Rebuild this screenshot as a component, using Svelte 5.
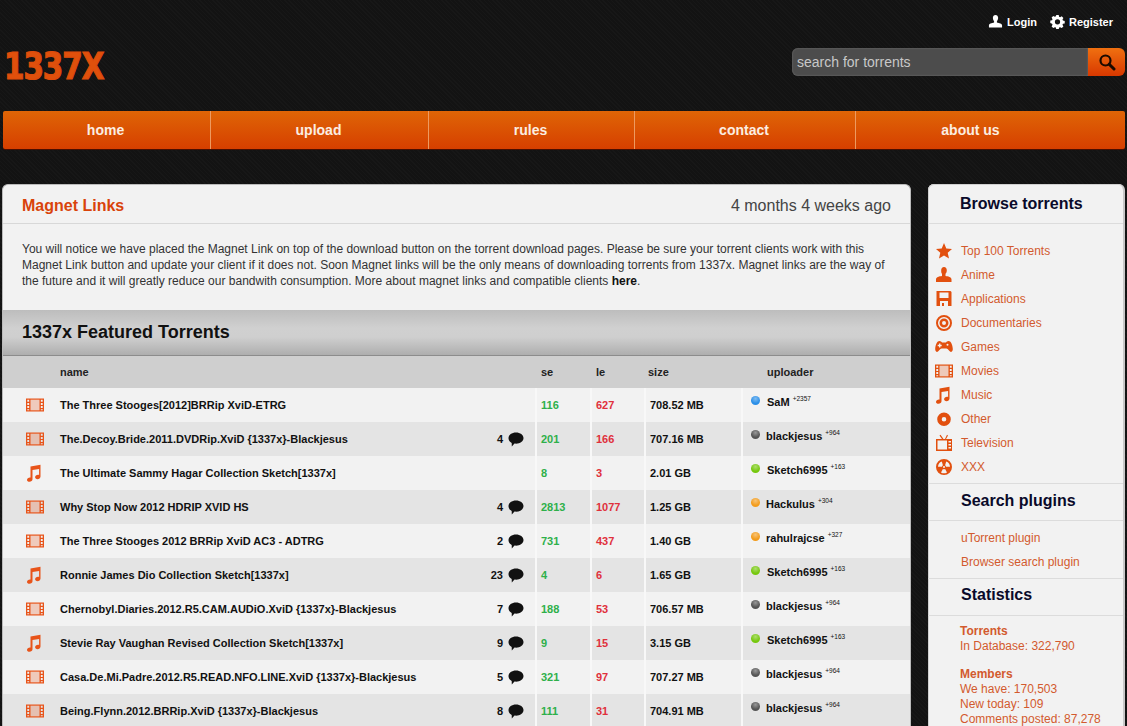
<script>
  const cats = ['Top 100 Torrents','Anime','Applications','Documentaries','Games','Movies','Music','Other','Television','XXX'];
  const catIcons = ['star','user','disk','doc','game','film','music','other','tv','xxx'];
  const nav = [['home',208,2],['upload',218,2],['rules',206,2],['contact',221,2],['about us',270,40]];
  const rows = [
    ['film','The Three Stooges[2012]BRRip XviD-ETRG','', '116','627','708.52 MB','#2b8fe8','SaM','+2357',7],
    ['film','The.Decoy.Bride.2011.DVDRip.XviD {1337x}-Blackjesus','4','201','166','707.16 MB','#555','blackjesus','+964',6],
    ['music','The Ultimate Sammy Hagar Collection Sketch[1337x]','','8','3','2.01 GB','#76c80e','Sketch6995','+163',7],
    ['film','Why Stop Now 2012 HDRIP XVID HS','4','2813','1077','1.25 GB','#f39c1c','Hackulus','+304',6],
    ['film','The Three Stooges 2012 BRRip XviD AC3 - ADTRG','2','731','437','1.40 GB','#f39c1c','rahulrajcse','+327',6],
    ['music','Ronnie James Dio Collection Sketch[1337x]','23','4','6','1.65 GB','#76c80e','Sketch6995','+163',7],
    ['film','Chernobyl.Diaries.2012.R5.CAM.AUDiO.XviD {1337x}-Blackjesus','7','188','53','706.57 MB','#555','blackjesus','+964',6],
    ['music','Stevie Ray Vaughan Revised Collection Sketch[1337x]','9','9','15','3.15 GB','#76c80e','Sketch6995','+163',7],
    ['film','Casa.De.Mi.Padre.2012.R5.READ.NFO.LINE.XviD {1337x}-Blackjesus','5','321','97','707.27 MB','#555','blackjesus','+964',6],
    ['film','Being.Flynn.2012.BRRip.XviD {1337x}-Blackjesus','8','111','31','704.91 MB','#555','blackjesus','+964',6]
  ];
</script>

{#snippet icon(name)}
  <svg class="ic" viewBox="0 0 18 18" fill="currentColor" aria-hidden="true">
    {#if name === 'star'}
      <path d="M9 1l2.300 5.400 5.700.5-4.300 3.800 1.300 5.800L9 13.400l-5 3.100 1.300-5.800L1 6.900l5.700-.5z"/>
    {:else if name === 'user'}
      <path d="M9 1c1.800 0 2.800 1.500 2.800 3.200 0 1.600-.6 2.900-1.300 3.600v2.200c2.500.3 6 .9 6 3.500v2.500H1V13.500c0-2.600 3.500-3.200 6-3.500V7.800C6.300 7.100 6.200 5.800 6.200 4.200 6.200 2.500 7.200 1 9 1z"/>
    {:else if name === 'disk'}
      <path fill-rule="evenodd" d="M1.500 1h14l1 1v14h-15zM4.500 2.500v5.500h9V2.500zM5 11v5h2v-3h2v3h4v-5z"/>
    {:else if name === 'doc'}
      <path fill-rule="evenodd" d="M9 1a8 8 0 1 1 0 16A8 8 0 0 1 9 1zm0 2a6 6 0 1 0 0 12A6 6 0 0 0 9 3zm0 1.500a4.500 4.500 0 1 1 0 9 4.500 4.500 0 0 1 0-9zm0 2.500a2 2 0 1 0 0 4 2 2 0 0 0 0-4z"/>
    {:else if name === 'game'}
      <path fill-rule="evenodd" d="M4.500 3c1.200 0 2 .8 2.600 1.500h3.800C11.500 3.800 12.300 3 13.500 3c2.300 0 4 3.500 4.300 8 .1 2-1.300 3.300-2.400 2.800-1.300-.6-2.300-3.300-3.900-3.300H6.500c-1.600 0-2.600 2.700-3.900 3.300C1.500 14.300.1 13 .2 11 .5 6.500 2.200 3 4.500 3zM4 5.500v1.300H2.700v1.400H4v1.300h1.400V8.200h1.300V6.800H5.400V5.500zM12.500 5.800a1 1 0 1 0 0 2 1 1 0 0 0 0-2z"/>
    {:else if name === 'film'}
      <path d="M3.500 4h11v10h-11z" opacity=".25"/>
      <path fill-rule="evenodd" d="M0 2.500h18v13H0zM1.300 3.800v1.900h1.900V3.800zm3.200 0v10.400h9V3.800zm10.300 0v1.900h1.900V3.800zM1.300 7v1.900h1.900V7zm13.500 0v1.900h1.900V7zM1.300 10.100V12h1.900v-1.900zm13.500 0V12h1.900v-1.900zM1.300 13.200v1h1.900v-1zm13.500 0v1h1.900v-1z"/>
    {:else if name === 'music'}
      <path d="M4.500 2.500 14.500.8v11.700c0 1.600-1.400 2.700-3 2.700-1.400 0-2.400-.8-2.400-1.900 0-1.400 1.400-2.500 3-2.500.4 0 .8.100 1 .2V5L6.500 6.100v9.200c0 1.500-1.400 2.500-3 2.500C2.100 17.800 1 17 1 15.900c0-1.400 1.400-2.500 3-2.500.2 0 .4 0 .5.100z"/>
    {:else if name === 'other'}
      <path fill-rule="evenodd" d="M9 2.500a6.800 6.800 0 1 1 0 13.600A6.800 6.800 0 0 1 9 2.500zm0 4.500a2.300 2.300 0 1 0 0 4.600A2.300 2.300 0 0 0 9 7z"/>
    {:else if name === 'tv'}
      <path fill-rule="evenodd" d="M1 5h6L4.500 1.500l1-.7L8.500 5h1.500L12 .8l1 .7L11 5h6v12H1zM2.500 6.500v9h9.500v-9zM13.500 7v1.500H16V7zm0 3v1.500H16V10zm0 3v1.500H16V13z"/>
    {:else}
      <path fill-rule="evenodd" d="M9 1a8 8 0 1 1 0 16A8 8 0 0 1 9 1zM6.800 3.500A6 6 0 0 0 3 8.800h4a2 2 0 0 1 .9-1.600zm4.400 0L10.100 7.200a2 2 0 0 1 .9 1.600h4a6 6 0 0 0-3.800-5.300zM9 8a1 1 0 1 0 0 2 1 1 0 0 0 0-2zm-1.100 3L6 14.400a6 6 0 0 0 6 0L10.100 11a2 2 0 0 1-2.200 0z"/>
    {/if}
  </svg>
{/snippet}

<div class="page">
  <header class="top">
    <div class="userlinks">
      <span class="ul">
        <svg viewBox="0 0 16 16" width="15" height="15" fill="#fff"><path d="M8 1c1.700 0 2.800 1.300 2.800 3.100 0 1.500-.6 2.800-1.300 3.500v1.500c2.500.5 5.500 1.200 5.500 3.200v2.200H1v-2.200c0-2 3-2.700 5.500-3.200V7.600C5.800 6.900 5.200 5.600 5.200 4.100 5.200 2.300 6.300 1 8 1z"/></svg>
        Login
      </span>
      <span class="ul">
        <svg viewBox="0 0 16 16" width="15" height="15" fill="#fff"><path fill-rule="evenodd" d="M6.700 1h2.600l.4 1.900 1.100.5 1.700-1 1.800 1.800-1 1.700.5 1.100 1.900.4v2.600l-1.900.4-.5 1.100 1 1.700-1.800 1.800-1.700-1-1.100.5-.4 1.900H6.700l-.4-1.900-1.100-.5-1.700 1-1.800-1.800 1-1.700-.5-1.100L.3 9.600V7l1.900-.4.5-1.100-1-1.700 1.800-1.800 1.700 1 1.100-.5zM8 5.500a2.800 2.800 0 1 0 0 5.600 2.800 2.800 0 0 0 0-5.600z"/></svg>
        Register
      </span>
    </div>
    <div class="brand">
      <div class="logo">1337X</div>
      <div class="search">
        <div class="field">search for torrents</div>
        <div class="go">
          <svg viewBox="0 0 18 18" width="18" height="18" fill="none" stroke="#1a0a00" stroke-width="2.200"><circle cx="7.500" cy="7.500" r="5"/><path d="M11.200 11.200 16 16" stroke-width="3" stroke-linecap="round"/></svg>
        </div>
      </div>
    </div>
    <nav class="nav">
      {#each nav as [label, w, pr]}
        <div class="navitem" style="width:{w}px;padding-right:{pr}px">{label}</div>
      {/each}
    </nav>
  </header>

  <div class="cols">
    <main class="panel">
      <div class="phead">
        <h2>Magnet Links</h2>
        <span class="when">4 months 4 weeks ago</span>
      </div>
      <p class="notice">You will notice we have placed the Magnet Link on top of the download button on the torrent download pages. Please be sure your torrent clients work with this Magnet Link button and update your client if it does not. Soon Magnet links will be the only means of downloading torrents from 1337x. Magnet links are the way of the future and it will greatly reduce our bandwith consumption. More about magnet links and compatible clients <b>here</b>.</p>
      <h3 class="featured">1337x Featured Torrents</h3>
      <table>
        <colgroup>
          <col style="width:533px"/><col style="width:55px"/><col style="width:54px"/><col style="width:97px"/><col/>
        </colgroup>
        <thead>
          <tr><th class="nm">name</th><th>se</th><th>le</th><th class="szh">size</th><th class="up">uploader</th></tr>
        </thead>
        <tbody>
          {#each rows as r}
            <tr>
              <td class="nm">
                <div class="namecell">
                  <span class="ricon">{@render icon(r[0])}</span>
                  <span class="title">{r[1]}</span>
                  {#if r[2]}
                    <span class="cmt">{r[2]}
                      <svg viewBox="0 0 16 15" width="16" height="15" fill="#111"><path d="M8 .5c4.200 0 7.500 2.400 7.500 5.600S12.200 11.700 8 11.700c-.5 0-1 0-1.500-.1L3.800 14.500l-.1-3.600C1.700 10 .5 8.300.5 6.100.5 2.900 3.800.5 8 .5z"/></svg>
                    </span>
                  {/if}
                </div>
              </td>
              <td class="se">{r[3]}</td>
              <td class="le">{r[4]}</td>
              <td class="sz">{r[5]}</td>
              <td class="ucell">
                <span class="dot" style="--c:{r[6]}"></span><span class="uname" style="margin-left:{r[9]}px">{r[7]}</span><sup>{r[8]}</sup>
              </td>
            </tr>
          {/each}
        </tbody>
      </table>
    </main>

    <aside class="side">
      <h4 class="browse">Browse torrents</h4>
      <ul class="catlist">
        {#each cats as c, i}
          <li><span class="cicon">{@render icon(catIcons[i])}</span>{c}</li>
        {/each}
      </ul>
      <h4 class="sh">Search plugins</h4>
      <ul class="plugins"><li>uTorrent plugin</li><li>Browser search plugin</li></ul>
      <h4 class="sh st">Statistics</h4>
      <div class="stats">
        <div class="grp"><b>Torrents</b><br/>In Database: 322,790</div>
        <div class="grp"><b>Members</b><br/>We have: 170,503<br/>New today: 109<br/>Comments posted: 87,278</div>
      </div>
    </aside>
  </div>
</div>

<style>
  :global(html), :global(body) { margin: 0; height: 726px; overflow: hidden; background: #151515; }
  .page {
    height: 726px; overflow: hidden; box-sizing: border-box;
    font-family: "Liberation Sans", Arial, sans-serif; color: #111;
    background: #141414 repeating-linear-gradient(45deg, #171717 0 1px, #131313 1px 3px);
  }
  .top { padding: 0 2px 0 3px; height: 184px; box-sizing: border-box; }
  .userlinks {
    display: flex; justify-content: flex-end; gap: 13px; height: 46px; padding: 14px 12px 0 0; box-sizing: border-box;
    color: #fff; font-size: 11px; font-weight: bold;
  }
  .ul { display: flex; align-items: center; gap: 4px; height: 15px; }
  .brand { display: flex; justify-content: space-between; height: 65px; align-items: flex-start; }
  .logo {
    font-family: "DejaVu Sans Condensed", "DejaVu Sans", sans-serif; font-weight: bold; font-size: 38px; line-height: 38px; letter-spacing: -1.200px;
    margin: 1px 0 0 1px; transform: scaleX(.86); transform-origin: left top;
    color: #e0500c; -webkit-text-stroke: 1.200px #de4c0b;
  }
  .search { display: flex; width: 333px; height: 28px; margin-top: 2px; }
  .field {
    flex: 1; background: #4c4c4c; border-radius: 6px 0 0 6px; color: #c8c8c8; font-size: 14px; line-height: 28px; padding-left: 5px;
    box-shadow: inset 0 0 2px #777;
  }
  .go {
    width: 37px; background: linear-gradient(#f07010, #d83800); border-radius: 0 6px 6px 0;
    display: flex; align-items: center; justify-content: center;
  }
  .nav { display: flex; height: 38px; background: linear-gradient(#df6506, #d63f00); border-radius: 2px; box-shadow: 0 1px 0 #4a0e00; }
  .navitem {
    box-sizing: border-box; border-right: 1px solid #ed9a60; color: #fbeee2; font-weight: bold; font-size: 14px; line-height: 38px; text-align: center;
  }
  .navitem:last-child { border-right: none; flex: 1; }
  .cols { display: flex; padding-left: 2px; }
  .panel {
    width: 909px; background: #f2f2f2; border-radius: 6px 6px 0 0; border: 1px solid #bbb; border-bottom: none; box-sizing: border-box; height: 542px; overflow: hidden;
  }
  .phead {
    display: flex; justify-content: space-between; align-items: center; height: 39px; padding: 3px 19px 0; box-sizing: border-box; border-bottom: 1px solid #d8d8d8;
  }
  h2 { margin: 0; font-size: 16px; color: #d9430a; }
  .when { font-size: 16px; color: #444; }
  .notice { margin: 0; padding: 17px 19px 20px; font-size: 12px; line-height: 16px; color: #333; height: 49px; box-sizing: content-box; }
  .notice b { color: #111; }
  .featured {
    margin: 0; height: 45px; line-height: 45px; padding-left: 19px; font-size: 18px; color: #111;
    background: linear-gradient(#bdbdbd, #d0d0d0 40%, #cfcfcf 60%, #aeaeae);
    border-bottom: 1px solid #8c8c8c;
  }
  table { width: 100%; border-collapse: collapse; table-layout: fixed; font-size: 11px; }
  th {
    height: 32px; background: #cfcfcf; text-align: left; padding: 0 0 1px 5px; font-weight: bold; color: #222; font-size: 11px; box-sizing: border-box;
  }
  th.nm { padding-left: 57px; }
  th.szh { padding-left: 3px; }
  th.up { padding-left: 25px; }
  td { height: 34px; padding: 0 0 0 4px; font-weight: bold; box-sizing: border-box; border-left: 2px solid #f8f8f8; }
  td.nm { border-left: none; padding: 0; }
  tbody tr:nth-child(odd) { background: #f2f2f2; }
  tbody tr:nth-child(even) { background: #e4e4e4; }
  .namecell { display: flex; align-items: center; height: 34px; }
  .ricon { width: 57px; display: flex; justify-content: center; padding-left: 6px; box-sizing: border-box; color: #e8541a; }
  .title { flex: 1; white-space: nowrap; }
  .cmt { display: flex; align-items: center; gap: 5px; padding-right: 11px; font-size: 11px; }
  .ic { width: 18px; height: 18px; display: block; }
  .se { color: #2eb04a; }
  .le { color: #e0303c; }
  .ucell { white-space: nowrap; padding: 0 0 6px 8px; }
  .dot {
    display: inline-block; width: 9px; height: 9px; border-radius: 50%; vertical-align: 1px;
    background: radial-gradient(circle at 50% 30%, #fff6, transparent 60%), var(--c);
  }
  sup { font-size: 6.500px; font-weight: normal; margin-left: 3px; vertical-align: 5px; line-height: 0; }
  .side {
    width: 197px; margin-left: 17px; background: #f2f2f2; border-radius: 6px 6px 0 0; height: 542px; overflow: hidden; box-sizing: border-box;
    color: #d25a2e; font-size: 12px; border-right: 2px solid #c8c8c8; box-shadow: inset 0 1px 0 #d0d0d0, inset 1px 0 0 #d0d0d0;
  }
  h4 { margin: 0; color: #0a0a2a; font-size: 16px; padding-left: 32px; border-bottom: 1px solid #dcdcdc; box-sizing: border-box; }
  .browse { height: 40px; line-height: 39px; }
  ul { list-style: none; margin: 0; padding: 0; }
  .catlist { padding: 15px 0 4px 7px; height: 260px; box-sizing: border-box; border-bottom: 1px solid #dcdcdc; }
  .catlist li { display: flex; align-items: center; height: 24px; }
  .cicon { width: 26px; color: #e2500f; }
  .sh { height: 37px; line-height: 33px; padding-left: 33px; }
  .plugins { padding: 5px 0 0 33px; height: 58px; box-sizing: border-box; border-bottom: 1px solid #dcdcdc; }
  .plugins li { height: 24px; line-height: 24px; }
  .st { height: 37px; line-height: 31px; }
  .stats { padding: 8px 0 0 32px; line-height: 15px; }
  .grp { margin-bottom: 13px; }
</style>
